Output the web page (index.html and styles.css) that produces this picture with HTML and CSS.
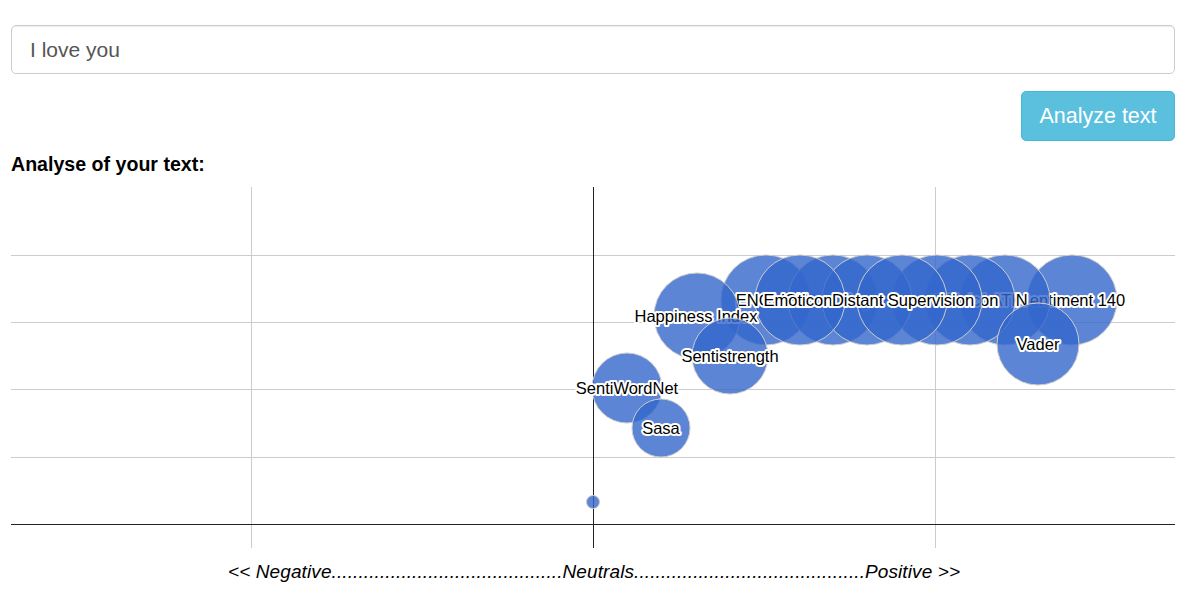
FILE: index.html
```html
<!DOCTYPE html>
<html>
<head>
<meta charset="utf-8">
<title>Analyze text</title>
<link rel="stylesheet" href="styles.css">
</head>
<body>
<div class="page">
  <input class="text-input" type="text" value="I love you">
  <div class="actions">
    <button class="btn-analyze" type="button">Analyze text</button>
  </div>
  <h4 class="title">Analyse of your text:</h4>
  <svg class="chart" viewBox="11 174 1164 418" width="1164" height="418" xmlns="http://www.w3.org/2000/svg">
    <g class="grid">
      <line x1="11" y1="255.5" x2="1175" y2="255.5"/>
      <line x1="11" y1="322.5" x2="1175" y2="322.5"/>
      <line x1="11" y1="389.5" x2="1175" y2="389.5"/>
      <line x1="11" y1="457.5" x2="1175" y2="457.5"/>
      <line x1="251.5" y1="187" x2="251.5" y2="548"/>
      <line x1="935.5" y1="187" x2="935.5" y2="548"/>
    </g>
    <g class="axis">
      <line x1="11" y1="524.5" x2="1175" y2="524.5"/>
      <line x1="593.5" y1="187" x2="593.5" y2="548"/>
    </g>

    <g class="bubbles">
      <circle cx="1072" cy="300" r="45"/>
      <text class="lbl" x="1072" y="306">Sentiment 140</text>
      <circle cx="1005" cy="300" r="45"/>
      <text class="lbl" x="1005" y="306">LATIN</text>
      <circle cx="970" cy="300" r="45"/>
      <text class="lbl" x="970" y="306">Lexicon</text>
      <text class="lbl" x="937" y="306">SenticNet</text>
      <circle cx="937" cy="300" r="45"/>
      <circle cx="766" cy="300" r="45"/>
      <text class="lbl" x="833" y="306">Pattern</text>
      <circle cx="833" cy="300" r="45"/>
      <text class="lbl" x="867" y="306">Bing Liu</text>
      <circle cx="867" cy="300" r="45"/>
      <circle cx="800" cy="300" r="45"/>
      <circle cx="902" cy="300" r="45"/>
      <text class="lbl" x="772" y="306">ENGLISH</text>
      <text class="lbl" x="798" y="306">Emoticon</text>
      <text class="lbl" x="903" y="306">Distant Supervision</text>

      <circle cx="697" cy="316" r="43"/>
      <text class="lbl" x="696" y="322">Happiness Index</text>
      <circle cx="1038" cy="344" r="41"/>
      <text class="lbl" x="1038" y="350">Vader</text>
      <circle cx="730" cy="356" r="38"/>
      <text class="lbl" x="730" y="362">Sentistrength</text>
      <circle cx="627" cy="388" r="35"/>
      <text class="lbl" x="627" y="394">SentiWordNet</text>
      <circle cx="661" cy="428" r="29"/>
      <text class="lbl" x="661" y="434">Sasa</text>
      <circle cx="593" cy="502" r="6.5"/>
    </g>

    <text class="axis-title" x="228" y="578" textLength="732" lengthAdjust="spacing">&lt;&lt; Negative...........................................Neutrals...........................................Positive &gt;&gt;</text>
  </svg>
</div>
</body>
</html>
```

FILE: styles.css
```css
html, body {
  margin: 0;
  padding: 0;
  background: #ffffff;
}

body {
  font-family: "Liberation Sans", Arial, Helvetica, sans-serif;
  color: #000;
}

.page {
  width: 1164px;
  padding: 25px 25px 0 11px;
}

.text-input {
  display: block;
  width: 100%;
  height: 49px;
  box-sizing: border-box;
  margin: 0;
  padding: 0 18px;
  border: 1px solid #cccccc;
  border-radius: 5px;
  box-shadow: inset 0 1px 1px rgba(0, 0, 0, 0.075);
  font-family: "Liberation Sans", Arial, Helvetica, sans-serif;
  font-size: 21px;
  color: #555555;
  background: #fff;
  outline: none;
}

.actions {
  display: flex;
  justify-content: flex-end;
  margin-top: 17px;
}

.btn-analyze {
  width: 154px;
  height: 50px;
  box-sizing: border-box;
  margin: 0;
  padding: 0;
  border: 1px solid #46b8da;
  border-radius: 5px;
  background: #5bc0de;
  color: #ffffff;
  font-family: "Liberation Sans", Arial, Helvetica, sans-serif;
  font-size: 21.5px;
  line-height: 48px;
  text-align: center;
}

.title {
  margin: 13px 0 0;
  font-size: 19.6px;
  line-height: 20px;
  font-weight: bold;
}

.chart {
  display: block;
}

.grid line {
  stroke: #cccccc;
  stroke-width: 1;
}

.axis line {
  stroke: #222222;
  stroke-width: 1;
}

.bubbles circle {
  fill: #3366cc;
  fill-opacity: 0.8;
  stroke: #cccccc;
  stroke-width: 1;
}

.lbl {
  font-family: "Liberation Sans", Arial, Helvetica, sans-serif;
  font-size: 16.5px;
  fill: #000000;
  stroke: #ffffff;
  stroke-width: 4px;
  stroke-linejoin: round;
  paint-order: stroke;
  text-anchor: middle;
}

.axis-title {
  font-family: "Liberation Sans", Arial, Helvetica, sans-serif;
  font-size: 19px;
  font-style: italic;
  fill: #000000;
  text-anchor: start;
}
```
